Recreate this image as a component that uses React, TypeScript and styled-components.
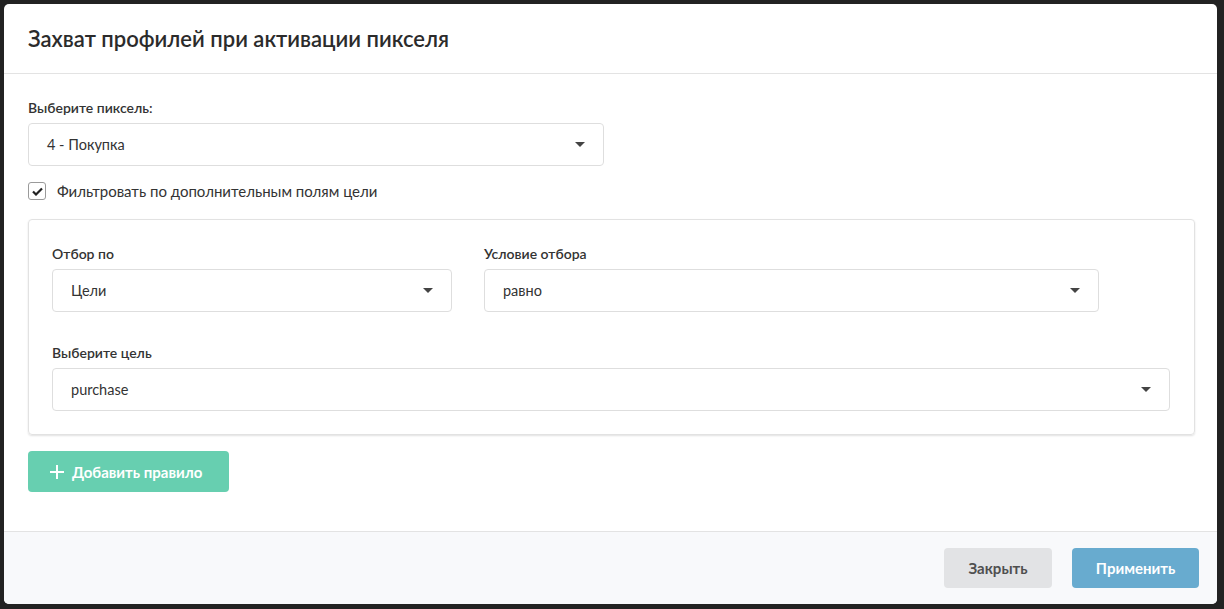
import React from "react";
import styled, { createGlobalStyle } from "styled-components";

const Global = createGlobalStyle`
  html, body { margin: 0; padding: 0; background: #222222; }
  body { font-family: "Lato", "Noto Sans", sans-serif; color: #333; }
  * { box-sizing: border-box; }
`;

const Backdrop = styled.div`
  width: 1224px;
  height: 609px;
  padding: 4px 7px 5px 4px;
  background: #222222;
`;

const Modal = styled.div`
  height: 100%;
  background: #fff;
  border-radius: 5px;
  display: flex;
  flex-direction: column;
  overflow: hidden;
`;

const Header = styled.div`
  height: 70px;
  padding: 0 24px;
  display: flex;
  align-items: center;
  border-bottom: 1px solid #e3e3e3;
`;

const Title = styled.h2`
  margin: 0;
  font-size: 22px;
  font-weight: 600;
  color: #2b2b2b;
`;

const Body = styled.div`
  flex: 1;
  padding: 25px 22px 0 24px;
`;

const Label = styled.div`
  font-size: 14px;
  font-weight: 600;
  color: #333;
  line-height: 18px;
  margin-bottom: 6px;
`;

const SelectBox = styled.div<{ $w?: number }>`
  width: ${(p) => (p.$w ? `${p.$w}px` : "100%")};
  height: 43px;
  border: 1px solid #dedede;
  border-radius: 4px;
  background: #fff;
  display: flex;
  align-items: center;
  justify-content: space-between;
  padding: 0 18px 0 18px;
  font-size: 14.5px;
  color: #333;
`;

const Caret = styled.span`
  width: 0;
  height: 0;
  border-left: 5px solid transparent;
  border-right: 5px solid transparent;
  border-top: 5px solid #444;
`;

const CheckRow = styled.label`
  display: flex;
  align-items: center;
  gap: 11px;
  margin-top: 16px;
  font-size: 15px;
  color: #333;
`;

const CheckBox = styled.span`
  width: 18px;
  height: 18px;
  border: 1px solid #9a9a9a;
  border-radius: 3px;
  display: flex;
  align-items: center;
  justify-content: center;
`;

const Card = styled.div`
  margin-top: 19px;
  border: 1px solid #e2e2e2;
  border-radius: 4px;
  box-shadow: 0 1px 2px rgba(0, 0, 0, 0.12);
  padding: 25px 24px 23px 23px;
  display: flex;
  flex-direction: column;
  gap: 32px;
`;

const Row = styled.div`
  display: flex;
  gap: 32px;
`;

const Field = styled.div``;

const AddButton = styled.button`
  margin-top: 16px;
  width: 201px;
  height: 41px;
  border: none;
  border-radius: 4px;
  background: #67cfb0;
  color: #fff;
  font-family: inherit;
  font-size: 15px;
  font-weight: 700;
  display: flex;
  align-items: center;
  gap: 8px;
  padding: 0 0 0 22px;
`;

const Footer = styled.div`
  height: 73px;
  background: #f8f9fb;
  border-top: 1px solid #e3e3e3;
  display: flex;
  justify-content: flex-end;
  align-items: center;
  gap: 20px;
  padding: 0 18px 0 0;
`;

const FooterButton = styled.button<{ $primary?: boolean; $w: number }>`
  width: ${(p) => p.$w}px;
  height: 40px;
  border: none;
  border-radius: 4px;
  font-family: inherit;
  font-size: 15px;
  font-weight: 700;
  background: ${(p) => (p.$primary ? "#68abcf" : "#e2e3e5")};
  color: ${(p) => (p.$primary ? "#fff" : "#4f4f4f")};
`;

const Select = ({ value, w }: { value: string; w?: number }) => (
  <SelectBox $w={w}>
    <span>{value}</span>
    <Caret />
  </SelectBox>
);

export default function App() {
  return (
    <>
      <Global />
      <Backdrop>
        <Modal>
          <Header>
            <Title>Захват профилей при активации пикселя</Title>
          </Header>
          <Body>
            <Label>Выберите пиксель:</Label>
            <Select value="4 - Покупка" w={576} />
            <CheckRow>
              <CheckBox>
                <svg width="11" height="9" viewBox="0 0 11 9">
                  <path d="M1 4.5 L4 7.5 L10 1.5" fill="none" stroke="#222" strokeWidth="2.2" />
                </svg>
              </CheckBox>
              Фильтровать по дополнительным полям цели
            </CheckRow>
            <Card>
              <Row>
                <Field>
                  <Label>Отбор по</Label>
                  <Select value="Цели" w={400} />
                </Field>
                <Field>
                  <Label>Условие отбора</Label>
                  <Select value="равно" w={615} />
                </Field>
              </Row>
              <Field>
                <Label>Выберите цель</Label>
                <Select value="purchase" />
              </Field>
            </Card>
            <AddButton>
              <svg width="14" height="14" viewBox="0 0 14 14">
                <path d="M7 0 V14 M0 7 H14" stroke="#fff" strokeWidth="2" />
              </svg>
              Добавить правило
            </AddButton>
          </Body>
          <Footer>
            <FooterButton $w={108}>Закрыть</FooterButton>
            <FooterButton $primary $w={127}>Применить</FooterButton>
          </Footer>
        </Modal>
      </Backdrop>
    </>
  );
}
